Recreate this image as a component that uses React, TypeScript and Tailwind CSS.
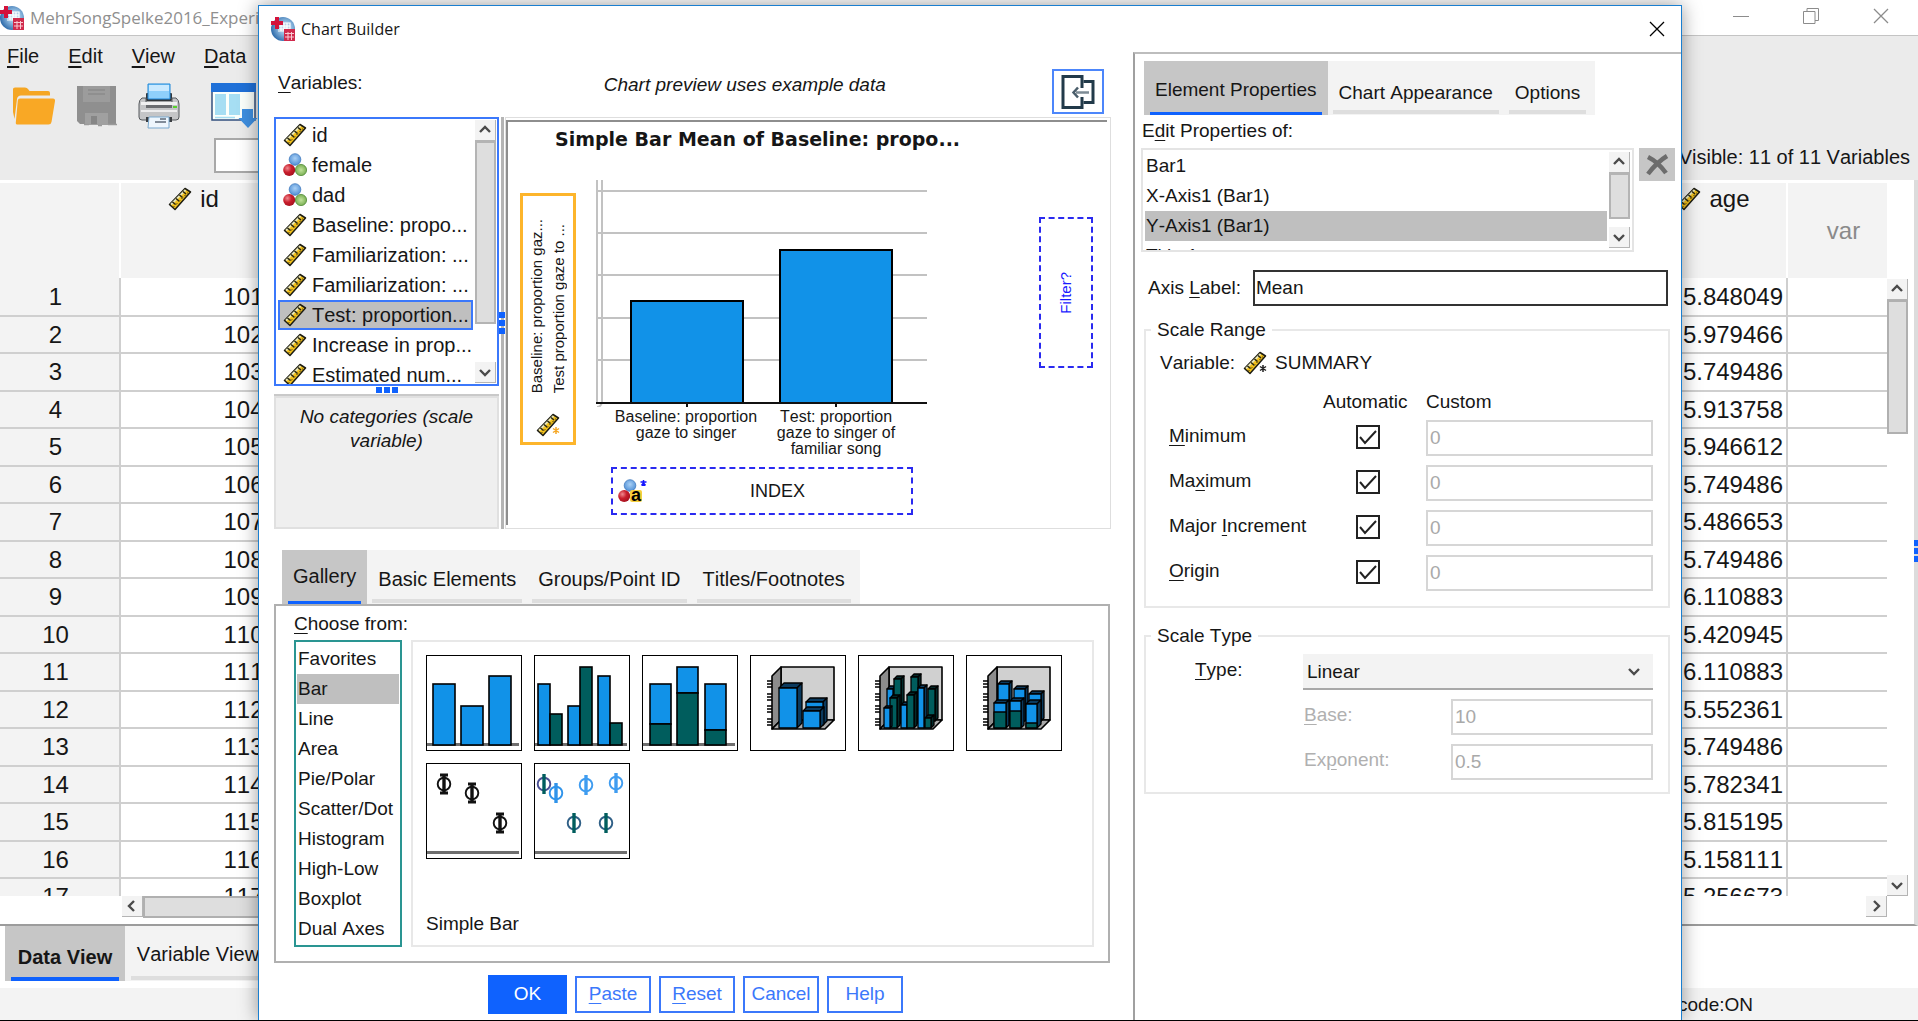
import React from "react";

const BLUE = "#1192e8";
const TEAL = "#005d5d";

/* ---------- icons ---------- */

function AppLogo() {
  return (
    <svg width="24" height="24" viewBox="0 0 24 24" aria-hidden="true" className="shrink-0">
      <defs>
        <radialGradient id="globe" cx="0.6" cy="0.45" r="0.6">
          <stop offset="0" stopColor="#e3eef8" />
          <stop offset="0.5" stopColor="#86b3db" />
          <stop offset="1" stopColor="#2f6cab" />
        </radialGradient>
      </defs>
      <circle cx="12" cy="12" r="12" fill="url(#globe)" />
      <path d="M9 6h10v8H7M7 9h12M7 12h12M10 6v8M13 6v8M16 6v8" fill="none" stroke="#fff" strokeWidth="1.2" />
      <path d="M4 0h4v4h4v4H8v4H4V8H0V4h4z" fill="#d3123a" />
      <rect x="13" y="12" width="11" height="12" fill="#d02a4c" />
      <path d="M14 16.500h9M14 20h9M17 15v8M20.500 15v8" stroke="#f8c9d2" strokeWidth="1" />
    </svg>
  );
}

function Ruler({ star }: { star?: string }) {
  return (
    <svg width="24" height="24" viewBox="0 0 24 24" aria-hidden="true" className="shrink-0">
      <path d="M1.500 17.500 17 1.500l5.500 3.500L7 22.500z" fill="#f2c11c" stroke="#1c1c14" strokeWidth="1.500" strokeLinejoin="round" />
      <path d="M3 17.500 17.500 3" stroke="#e8e6b8" strokeWidth="1.800" />
      <path d="M4.500 15l3 2.500M8 11.500l3 2.500M11.500 8l3 2.500M15 4.500l3 2.500" stroke="#2a2712" strokeWidth="1.600" />
      <path d="M5 20.500 20 5.500" stroke="#3a3618" strokeWidth="1" strokeDasharray="2 2" />
      {star && <path d="M20 14v7M17 15.500l6 4M23 15.500l-6 4" stroke={star} strokeWidth="1.500" />}
    </svg>
  );
}

function Balls({ letter }: { letter?: boolean }) {
  return (
    <svg width={letter ? 30 : 24} height="24" viewBox={letter ? "0 0 30 24" : "0 0 24 24"} aria-hidden="true" className="shrink-0">
      <defs>
        <radialGradient id="ballBlue" cx="0.5" cy="0.4" r="0.6">
          <stop offset="0" stopColor="#a9d0f5" />
          <stop offset="1" stopColor="#4f8fd6" />
        </radialGradient>
        <radialGradient id="ballRed" cx="0.35" cy="0.35" r="0.7">
          <stop offset="0" stopColor="#f08a90" />
          <stop offset="0.5" stopColor="#c91e2c" />
          <stop offset="1" stopColor="#a5101e" />
        </radialGradient>
        <radialGradient id="ballGreen" cx="0.5" cy="0.5" r="0.6">
          <stop offset="0" stopColor="#c2e39c" />
          <stop offset="1" stopColor="#6ba544" />
        </radialGradient>
      </defs>
      <circle cx="12" cy="6.500" r="5.800" fill="url(#ballBlue)" stroke="#3f79bd" strokeWidth="0.800" />
      <circle cx="6.200" cy="17" r="6" fill="url(#ballRed)" />
      {letter ? (
        <>
          <rect x="12" y="11" width="12" height="12" rx="2" fill="#f6cf3c" />
          <text x="13" y="22" fontFamily="Liberation Sans, sans-serif" fontWeight="700" fontSize="18" fill="#000">a</text>
          <path d="M25.500 1v6M22.500 3h6M23.500 6.500l2-2.500 2 2.500" stroke="#1414ff" strokeWidth="1.500" fill="none" />
        </>
      ) : (
        <circle cx="18" cy="17" r="5.600" fill="url(#ballGreen)" stroke="#4f8a35" strokeWidth="0.800" />
      )}
    </svg>
  );
}

function Chevron({ dir }: { dir: "up" | "down" | "left" | "right" }) {
  const d = {
    up: "M2 9l5-5 5 5",
    down: "M2 5l5 5 5-5",
    left: "M9 2L4 7l5 5",
    right: "M5 2l5 5-5 5",
  }[dir];
  return (
    <svg width="14" height="14" viewBox="0 0 14 14" aria-hidden="true">
      <path d={d} fill="none" stroke="#4a4a4a" strokeWidth="2.400" />
    </svg>
  );
}

function ArrowButton({ dir, label }: { dir: "up" | "down" | "left" | "right"; label: string }) {
  return (
    <button aria-label={label} className="flex h-[21px] w-[21px] shrink-0 items-center justify-center border-r border-b border-[#b4b4b4] bg-[#f3f3f3]">
      <Chevron dir={dir} />
    </button>
  );
}

function FolderIcon() {
  return (
    <svg width="44" height="40" viewBox="0 0 44 40" aria-hidden="true">
      <path d="M1 3q0-1.500 2-1.500h10q2 0 3 1.500l1.500 2H36q2 0 2 2v2.500H9q-3.500 0-4 3.500L2.500 33 1 26z" fill="#f5a623" />
      <path d="M8 12.500h33q2.300 0 2 2.500l-3.500 21q-.5 2.500-3 2.500H5q-1.500 0-1.200-2l2-22q.2-2 2.200-2z" fill="#f9a825" />
    </svg>
  );
}

function SaveIcon() {
  return (
    <svg width="42" height="42" viewBox="0 0 42 42" aria-hidden="true">
      <path d="M1 1h39v38H4l-3-3z" fill="#8f8f8f" />
      <rect x="7" y="1" width="27" height="16" fill="#9c9c9c" />
      <path d="M12 5h17M12 9h17" stroke="#8a8a8a" strokeWidth="1.500" />
      <rect x="9" y="28" width="23" height="12" fill="#a0a0a0" />
      <rect x="15" y="31" width="6" height="8" fill="#868686" />
      <path d="M8 39.500h5M22 40.500h4M32 39.500h9" stroke="#9a9a9a" strokeWidth="1.500" />
    </svg>
  );
}

function PrintIcon() {
  return (
    <svg width="42" height="46" viewBox="0 0 42 46" aria-hidden="true">
      <rect x="8" y="10" width="26" height="8" rx="1" fill="#33373b" />
      <path d="M10 1h22v15H10z" fill="#8fd0fb" stroke="#1d86d8" strokeWidth="1" />
      <path d="M11 2h20v6H11z" fill="#c9e9ff" />
      <path d="M4 15h4v4h26v-4h4q3 2 3 6v13q0 3-3 3H4q-3 0-3-3V21q0-4 3-6z" fill="#c4c5c7" stroke="#55585c" strokeWidth="1" />
      <path d="M3 19h36v3H3z" fill="#f0f0f1" />
      <path d="M8 22h26v3H8z" fill="#6a6c70" />
      <path d="M3 27h36v2H3z" fill="#ededee" />
      <rect x="35" y="23" width="4" height="2" fill="#56d22c" />
      <path d="M8 34h26v5H8z" fill="#3a3d41" />
      <path d="M11 34h20v11H10z" fill="#eef6fd" stroke="#7aa9cf" strokeWidth="1" />
      <path d="M17 39h11M22 36h6" stroke="#5d6a78" strokeWidth="1.300" />
    </svg>
  );
}

function GridDownIcon() {
  return (
    <svg width="48" height="46" viewBox="0 0 48 46" aria-hidden="true">
      <rect x="1" y="1" width="43" height="36" fill="#fbfffb" stroke="#33507f" strokeWidth="1.500" />
      <rect x="0" y="0" width="45" height="9" fill="#1f70d8" />
      <rect x="4" y="11" width="11" height="21" fill="#a6def3" />
      <rect x="18" y="11" width="11" height="21" fill="#a6def3" />
      <path d="M4 34.500h20" stroke="#a6def3" strokeWidth="1.500" />
      <path d="M31 26h11v9h4.500L37 45l-9.500-10H31z" fill="#3f8fe0" />
    </svg>
  );
}

/* ---------- gallery thumbnails ---------- */

function Baseline() {
  return <rect x="1" y="88" width="92" height="3" fill="#6f6f6f" />;
}

function Rects({ items }: { items: [number, number, number, number, string][] }) {
  return (
    <>
      {items.map(([x1, y1, x2, y2, fill]) => (
        <rect key={`${x1}-${y1}`} x={x1} y={y1} width={x2 - x1} height={y2 - y1} fill={fill} stroke="#000" strokeWidth="1.600" />
      ))}
    </>
  );
}

function Room() {
  return (
    <g stroke="#000" strokeWidth="1.600" strokeLinejoin="round">
      <path d="M31 12h53v53H31z" fill="#d0d0d0" />
      <path d="M22 21l9-9v53l-9 9z" fill="#8c8c8c" />
      <path d="M22 74l9-9h53l-9 9z" fill="#a8a8a8" />
      <path d="M17 26h5M17 29h5M17 32h5M17 39h5M17 42h5M17 45h5M17 51h5M17 54h5M17 57h5M17 64h5M17 67h5M17 70h5" />
    </g>
  );
}

function Block({ x, y, w, b, d = 4, fill, split }: { x: number; y: number; w: number; b: number; d?: number; fill: string; split?: number }) {
  const dark = fill === BLUE ? "#0b3a5e" : "#032a2a";
  return (
    <g stroke="#000" strokeWidth="1.300" strokeLinejoin="round">
      <path d={`M${x} ${y}l${d}-${d}h${w}l-${d} ${d}z`} fill={dark} />
      <path d={`M${x + w} ${y}l${d}-${d}V${b - d}l-${d} ${d}z`} fill={dark} />
      <rect x={x} y={y} width={w} height={b - y} fill={fill} />
      {split && <rect x={x} y={split} width={w} height={b - split} fill={TEAL} />}
    </g>
  );
}

function Phi({ x, y, color, stem, caps }: { x: number; y: number; color: string; stem?: string; caps?: boolean }) {
  return (
    <g fill="none">
      <circle cx={x} cy={y} r="6.300" stroke={color} strokeWidth="1.900" />
      <path d={`M${x} ${y - 10}v20`} stroke={stem ?? color} strokeWidth="3.400" />
      {caps && <path d={`M${x - 4} ${y - 9}h8M${x - 4} ${y + 9}h8`} stroke={color} strokeWidth="3" />}
    </g>
  );
}

const thumbnails: { label: string; art: React.ReactNode }[] = [
  {
    label: "Simple Bar",
    art: (<><Baseline /><Rects items={[[7, 29, 29, 90, BLUE], [35, 51, 57, 90, BLUE], [63, 21, 85, 90, BLUE]]} /></>),
  },
  {
    label: "Clustered Bar",
    art: (<><Baseline /><Rects items={[[4, 29, 16, 90, BLUE], [16, 59, 28, 90, TEAL], [34, 51, 46, 90, BLUE], [46, 12, 58, 90, TEAL], [64, 21, 76, 90, BLUE], [76, 68, 88, 90, TEAL]]} /></>),
  },
  {
    label: "Stacked Bar",
    art: (<><Baseline /><Rects items={[[8, 29, 29, 69, BLUE], [8, 69, 29, 90, TEAL], [35, 12, 56, 38, BLUE], [35, 38, 56, 90, TEAL], [63, 29, 84, 75, BLUE], [63, 75, 84, 90, TEAL]]} /></>),
  },
  {
    label: "Simple 3-D Bar",
    art: (<><Room /><Block x={56} y={47} w={17} b={70} fill={BLUE} /><Block x={29} y={33} w={18} b={73} d={5} fill={BLUE} /><Block x={53} y={56} w={17} b={73} d={4} fill={BLUE} /></>),
  },
  {
    label: "Clustered 3-D Bar",
    art: (
      <>
        <Room />
        <Block x={29} y={34} w={6} b={68} d={3} fill={BLUE} />
        <Block x={36} y={24} w={7} b={68} d={3} fill={TEAL} />
        <Block x={53} y={22} w={7} b={68} d={3} fill={TEAL} />
        <Block x={70} y={34} w={7} b={66} d={3} fill={TEAL} />
        <Block x={60} y={33} w={6} b={73} d={3} fill={BLUE} />
        <Block x={32} y={43} w={7} b={73} d={3} fill={TEAL} />
        <Block x={26} y={53} w={6} b={73} d={2} fill={BLUE} />
        <Block x={43} y={50} w={6} b={73} d={3} fill={BLUE} />
        <Block x={49} y={40} w={7} b={73} d={3} fill={TEAL} />
        <Block x={67} y={63} w={6} b={73} d={3} fill={TEAL} />
      </>
    ),
  },
  {
    label: "Stacked 3-D Bar",
    art: (
      <>
        <Room />
        <Block x={32} y={29} w={11} b={66} d={3} fill={BLUE} />
        <Block x={48} y={34} w={11} b={66} d={3} fill={BLUE} />
        <Block x={63} y={39} w={12} b={66} d={3} fill={BLUE} split={47} />
        <Block x={28} y={48} w={12} b={73} d={3} fill={BLUE} split={57} />
        <Block x={44} y={46} w={11} b={73} d={3} fill={BLUE} split={56} />
        <Block x={60} y={49} w={11} b={73} d={4} fill={BLUE} split={68} />
      </>
    ),
  },
  {
    label: "Simple Error Bar",
    art: (<><Baseline /><Phi x={18} y={21} color="#111" caps /><Phi x={46} y={30} color="#111" caps /><Phi x={74} y={60} color="#111" caps /></>),
  },
  {
    label: "Clustered Error Bar",
    art: (
      <>
        <Baseline />
        <Phi x={10} y={21} color="#4a4f94" stem={TEAL} />
        <Phi x={22} y={30} color="#2f93ea" />
        <Phi x={52} y={22} color="#3f9cf0" />
        <Phi x={82} y={20} color="#3f9cf0" />
        <Phi x={40} y={60} color="#2f5f86" stem={TEAL} />
        <Phi x={72} y={60} color="#2f5f86" stem={TEAL} />
      </>
    ),
  },
];

/* ---------- data ---------- */

const ages = [
  "5.848049", "5.979466", "5.749486", "5.913758", "5.946612", "5.749486", "5.486653", "5.749486", "6.110883",
  "5.420945", "6.110883", "5.552361", "5.749486", "5.782341", "5.815195", "5.158111", "5.256673",
];

const variables: { name: string; nominal?: boolean; selected?: boolean }[] = [
  { name: "id" },
  { name: "female", nominal: true },
  { name: "dad", nominal: true },
  { name: "Baseline: propo..." },
  { name: "Familiarization: ..." },
  { name: "Familiarization: ..." },
  { name: "Test: proportion...", selected: true },
  { name: "Increase in prop..." },
  { name: "Estimated num..." },
];

const chartTypes = ["Favorites", "Bar", "Line", "Area", "Pie/Polar", "Scatter/Dot", "Histogram", "High-Low", "Boxplot", "Dual Axes"];

function Mnemonic({ text, at = 0 }: { text: string; at?: number }) {
  return (
    <>
      {text.slice(0, at)}
      <span className="underline underline-offset-3">{text[at]}</span>
      {text.slice(at + 1)}
    </>
  );
}

/* ---------- data editor behind the dialog ---------- */

function WindowX({ color }: { color: string }) {
  return (
    <svg width="16" height="16" viewBox="0 0 16 16" aria-hidden="true">
      <path d="M1 1l14 14M15 1L1 15" stroke={color} strokeWidth="1.300" />
    </svg>
  );
}

function DataEditor() {
  return (
    <div className="flex h-full flex-col bg-white">
      <header className="flex h-9 shrink-0 items-center border-b border-[#c4c4c4] bg-white">
        <AppLogo />
        <h1 className="ml-[6px] flex-1 font-[Open_Sans,sans-serif] text-[17px] text-[#8f8f8f]">MehrSongSpelke2016_Experiment</h1>
        <div className="flex gap-[54px] pr-[29px] pb-1">
          <button aria-label="Minimize">
            <svg width="16" height="16" viewBox="0 0 16 16"><path d="M0 8.500h16" stroke="#8c8c8c" /></svg>
          </button>
          <button aria-label="Restore">
            <svg width="16" height="16" viewBox="0 0 16 16"><path d="M.5 3.500h11.500v12H.5zM4 3.500V.5h11.500v12H12" fill="none" stroke="#8c8c8c" /></svg>
          </button>
          <button aria-label="Close"><WindowX color="#8c8c8c" /></button>
        </div>
      </header>

      <div className="shrink-0 bg-[#ebebeb] pb-[7px]">
        <nav className="flex h-10 items-center gap-[29px] pb-px pl-[7px] text-[20px]">
          {["File", "Edit", "View", "Data"].map((m) => (
            <button key={m}><Mnemonic text={m} /></button>
          ))}
        </nav>
        <div className="flex h-[60px] items-start gap-[20px] pt-[7px] pl-3">
          <button aria-label="Open" className="pt-[3px]"><FolderIcon /></button>
          <button aria-label="Save" className="pt-[2px]"><SaveIcon /></button>
          <button aria-label="Print"><PrintIcon /></button>
          <button aria-label="Recall dialogs" className="ml-[11px]"><GridDownIcon /></button>
        </div>
        <div className="flex h-[37px] items-center justify-between pt-[2px] pr-2 pl-[214px]">
          <input aria-label="Cell value" className="h-[35px] w-[1200px] border-2 border-[#a8a8a8] bg-white" readOnly />
          <span className="pt-[2px] text-[20px] whitespace-nowrap">Visible: 11 of 11 Variables</span>
        </div>
      </div>

      <div className="flex min-h-0 flex-1 flex-col border-r-4 border-b-2 border-[#dcdcdc] border-b-[#9c9c9c] pr-[6px]">
        <div className="flex min-h-0 flex-1">
          <div className="min-h-0 flex-1 overflow-hidden pt-[3px]">
            <table className="w-full table-fixed border-collapse text-[24px] leading-7">
              <colgroup>
                <col className="w-[120px]" />
                <col className="w-[147px]" />
                <col />
                <col className="w-[147px]" />
                <col className="w-[100px]" />
              </colgroup>
              <thead>
                <tr className="h-[95px] bg-[#f3f3f3] align-top">
                  <th className="border-r-2 border-white" />
                  <th className="border-r-2 border-white pt-[2px] font-normal">
                    <span className="flex items-center justify-center gap-2"><Ruler />id</span>
                  </th>
                  <th className="border-r-2 border-white" />
                  <th className="border-r-2 border-white pt-[2px] font-normal">
                    <span className="flex items-center justify-center gap-2"><Ruler />age</span>
                  </th>
                  <th className="pl-3 align-middle font-normal text-[#8a8a8a]">var</th>
                </tr>
              </thead>
              <tbody>
                {ages.map((age, i) => (
                  <tr key={i} className="h-[37px] border-b-2 border-[#cfcfcf] odd:h-[38px]">
                    <th className="border-r-2 border-[#cfcfcf] bg-[#f3f3f3] pr-2 font-normal">{i + 1}</th>
                    <td className="border-r border-[#cfcfcf] pr-[3px] text-right">{101 + i}</td>
                    <td className="border-r border-[#cfcfcf]" />
                    <td className="border-r-2 border-[#cfcfcf] pr-[3px] text-right">{age}</td>
                    <td />
                  </tr>
                ))}
              </tbody>
            </table>
          </div>
          <div className="flex w-[21px] flex-col pt-[99px]">
            <ArrowButton dir="up" label="Scroll up" />
            <div className="h-[134px] border-2 border-[#b0b0b0] bg-[#dedede]" />
            <div className="flex-1" />
            <ArrowButton dir="down" label="Scroll down" />
          </div>
        </div>
        <div className="mr-[21px] mb-[6px] ml-[122px] flex h-[22px]">
          <ArrowButton dir="left" label="Scroll left" />
          <div className="mr-[400px] flex-1 border-2 border-[#b0b0b0] bg-[#dedede]" />
          <ArrowButton dir="right" label="Scroll right" />
        </div>
      </div>

      <div className="flex h-[62px] shrink-0 items-start pl-[5px]">
        <button className="flex h-[55px] w-[120px] flex-col items-center justify-end bg-[#c6c6c6] px-[6px] text-[20px] font-bold">
          <span className="pb-[5px]">Data View</span>
          <span className="h-[4px] w-full bg-[#0f62fe]" />
        </button>
        <button className="flex h-[55px] w-[140px] flex-col items-center justify-end bg-[#f3f3f3] pb-px pl-[6px] text-[20px]">
          <span className="pb-[7px] whitespace-nowrap">Variable View</span>
          <span className="h-[4px] w-full bg-[#dedede]" />
        </button>
      </div>
      <footer className="flex h-8 shrink-0 items-center justify-end bg-[#f3f3f3] pt-[2px] pr-[165px] text-[19px]">Unicode:ON</footer>
      <div className="h-px shrink-0 bg-black" />
    </div>
  );
}

/* ---------- dialog ---------- */

function Dots({ vertical }: { vertical?: boolean }) {
  return (
    <span className={vertical ? "flex flex-col gap-[2px]" : "flex gap-[2px]"}>
      <i className="size-[6px] bg-[#0f62fe]" />
      <i className="size-[6px] bg-[#0f62fe]" />
      <i className="size-[6px] bg-[#0f62fe]" />
    </span>
  );
}

function Tabs({ items }: { items: string[] }) {
  return (
    <div role="tablist" className="flex h-[54px] w-fit bg-[#f3f3f3] pr-1 whitespace-nowrap">
      {items.map((t, i) =>
        i === 0 ? (
          <button key={t} role="tab" aria-selected="true" className="flex flex-col items-center justify-end bg-[#c6c6c6] px-[6px]">
            <span className="px-[5px] pb-[10px]">{t}</span>
            <span className="h-[3px] w-full bg-[#0f62fe]" />
          </button>
        ) : (
          <button key={t} role="tab" aria-selected="false" className="flex flex-col items-center justify-end px-[5px] pb-px">
            <span className="px-[6px] pb-[5px]">{t}</span>
            <span className="h-[4px] w-full bg-[#dedede]" />
          </button>
        ),
      )}
    </div>
  );
}

function VariableList() {
  return (
    <div className="flex h-[269px] border-2 border-[#3b78fb] pl-[2px]">
      <ul id="variables" role="listbox" className="min-w-0 flex-1 overflow-hidden pt-px text-[20px]">
        {variables.map((v, i) => (
          <li
            key={i}
            role="option"
            aria-selected={!!v.selected}
            className={
              v.selected
                ? "flex h-[30px] items-center gap-[5px] border-2 border-[#3b78fb] bg-[#bfbfbf] pl-[3px] whitespace-nowrap"
                : "flex h-[30px] items-center gap-[5px] pl-[5px] whitespace-nowrap"
            }
          >
            {v.nominal ? <Balls /> : <Ruler />}
            {v.name}
          </li>
        ))}
      </ul>
      <div className="flex w-[24px] flex-col items-center py-px pl-px">
        <ArrowButton dir="up" label="Scroll variables up" />
        <div className="h-[183px] w-[21px] border-2 border-[#b4b4b4] bg-[#dedede]" />
        <div className="flex-1" />
        <ArrowButton dir="down" label="Scroll variables down" />
      </div>
    </div>
  );
}

function PreviewChart() {
  return (
    <figure className="w-[333px] text-[16px] leading-4">
      <svg width="333" height="228" viewBox="0 0 333 228" aria-label="Bar chart preview" className="block">
        <path d="M0 12h331M0 54h331M0 96h331M0 139h331M0 181h331" stroke="#c2c2c2" strokeWidth="2" />
        <path d="M1 1v223M6 1v222q-1 5-5 5" fill="none" stroke="#c2c2c2" strokeWidth="2" />
        <rect x="35" y="122" width="112" height="102" fill={BLUE} stroke="#000" strokeWidth="2" />
        <rect x="184" y="71" width="112" height="153" fill={BLUE} stroke="#000" strokeWidth="2" />
        <path d="M0 224h331M91 224v4M240 224v4" stroke="#111" strokeWidth="2" />
      </svg>
      <figcaption className="mt-[2px] mr-[3px] flex justify-center text-center">
        <span className="w-[150px]">Baseline: proportion gaze to singer</span>
        <span className="w-[150px]">Test: proportion gaze to singer of familiar song</span>
      </figcaption>
    </figure>
  );
}

function Preview() {
  return (
    <div className="flex-1 border border-[#dedede] pt-[2px] pr-[3px] pb-[3px]">
      <div className="flex h-full flex-col border-t-2 border-l-2 border-[#8e8e8e]">
        <div className="h-[57px] pt-[3px] pl-[47px] font-[DejaVu_Sans,sans-serif] text-[19px] leading-7 font-bold whitespace-nowrap">
          Simple Bar Mean of Baseline: propo...
        </div>
        <div className="flex pr-[14px] pl-[12px]">
          <div className="mt-[14px] flex h-[252px] w-[56px] flex-col items-center justify-end gap-[20px] border-[3px] border-[#fdb52b] pb-[5px]">
            <div className="rotate-180 text-[15px] leading-[22px] whitespace-nowrap [writing-mode:vertical-rl]">
              <div>Baseline: proportion gaz...</div>
              <div>Test proportion gaze to ...</div>
            </div>
            <Ruler star="#f5a623" />
          </div>
          <div className="ml-[20px]"><PreviewChart /></div>
          <div className="mt-[38px] ml-auto flex h-[151px] w-[54px] items-center justify-center border-2 border-dashed border-[#2a2af0] text-[15px] text-[#1a1aff]">
            <span className="rotate-180 [writing-mode:vertical-rl]">Filter?</span>
          </div>
        </div>
        <div className="mt-[10px] ml-[103px] flex h-[48px] w-[302px] items-center border-2 border-dashed border-[#2a2af0] pl-[5px] text-[18px]">
          <Balls letter />
          <span className="flex-1 pr-[4px] text-center">INDEX</span>
        </div>
      </div>
    </div>
  );
}

function BuilderPane() {
  return (
    <section className="flex min-w-0 flex-1 flex-col pr-[22px] pl-[15px]">
      <div className="flex h-[65px] items-start justify-between pr-[7px] pl-1">
        <label htmlFor="variables" className="pt-[17px] text-[19px]"><Mnemonic text="Variables:" /></label>
        <p className="pt-[19px] pl-[75px] text-[19px] italic">Chart preview uses example data</p>
        <button aria-label="Collapse panel" className="mt-[17px] flex h-[45px] w-[52px] items-center justify-center border-2 border-[#4c86fb]">
          <svg width="34" height="34" viewBox="0 0 34 34" aria-hidden="true">
            <path d="M21 13V1.500H2v31h19V22" fill="none" stroke="#223a4a" strokeWidth="3" />
            <path d="M22.500 6.500h9.500v21h-9.500" fill="none" stroke="#223a4a" strokeWidth="3" />
            <path d="M28 17.500H15" fill="none" stroke="#7d8b95" strokeWidth="2.500" />
            <path d="M17 12.500l-4.500 5 4.500 5" fill="none" stroke="#4a5d6a" strokeWidth="2.500" />
          </svg>
        </button>
      </div>

      <div className="flex h-[412px]">
        <div className="flex w-[225px] flex-col">
          <VariableList />
          <div className="flex h-[10px] items-center justify-center border-b-2 border-[#c9c9c9]"><Dots /></div>
          <div className="flex-1 border-2 border-[#e0e0e0] bg-[#efefef] px-2 pt-[7px] text-center text-[19px] leading-6 italic">
            No categories (scale variable)
          </div>
        </div>
        <div className="flex w-[6px] justify-center">
          <div className="flex w-[3px] items-center justify-center bg-[#b4b4b4]"><Dots vertical /></div>
        </div>
        <Preview />
      </div>

      <div className="mt-[21px] mr-[2px] ml-2 text-[19px] min-[1600px]:text-[20px]"><Tabs items={["Gallery", "Basic Elements", "Groups/Point ID", "Titles/Footnotes"]} /></div>
      <div className="mr-px flex h-[359px] flex-col border-2 border-[#b0b0b0] pt-[3px] pr-[14px] pl-[18px] text-[19px]">
        <label htmlFor="chart-types" className="h-[31px] pt-[1px]"><Mnemonic text="Choose from:" /></label>
        <div className="flex h-[307px] gap-[9px]">
          <ul id="chart-types" role="listbox" className="w-[108px] border-2 border-[#2a9592] px-px py-[2px]">
            {chartTypes.map((t) => (
              <li
                key={t}
                role="option"
                aria-selected={t === "Bar"}
                className={t === "Bar" ? "h-[30px] bg-[#bfbfbf] pl-px leading-[30px]" : "h-[30px] pl-px leading-[30px] whitespace-nowrap"}
              >
                {t}
              </li>
            ))}
          </ul>
          <div className="flex flex-1 flex-col justify-between border-2 border-[#e8e8e8] pt-[13px] pb-[7px] pl-[13px]">
            <div className="flex flex-wrap gap-3">
              {thumbnails.map((t) => (
                <button key={t.label} aria-label={t.label} className="size-[96px] border border-black">
                  <svg width="94" height="94" viewBox="1 1 94 94" aria-hidden="true">{t.art}</svg>
                </button>
              ))}
            </div>
            <div>Simple Bar</div>
          </div>
        </div>
      </div>

      <div className="mt-3 flex items-center justify-center gap-2 pl-[6px] text-[19px]">
        <button className="h-[39px] w-[79px] bg-[#0f62fe] text-white">OK</button>
        {["Paste", "Reset", "Cancel", "Help"].map((b) => (
          <button key={b} className="h-[37px] w-[76px] border-2 border-[#3b78fb] text-[#3b78fb]">
            {b === "Paste" || b === "Reset" ? <Mnemonic text={b} /> : b}
          </button>
        ))}
      </div>
    </section>
  );
}

const ranges = [
  { id: "min", text: "Minimum", at: 0 },
  { id: "max", text: "Maximum", at: 2 },
  { id: "inc", text: "Major Increment", at: 6 },
  { id: "org", text: "Origin", at: 0 },
];

const exponents = [
  { id: "base", text: "Base:", value: "10", at: 0 },
  { id: "exponent", text: "Exponent:", value: "0.5", at: 2 },
];

function PropertiesPane() {
  return (
    <section className="w-[548px] shrink-0 border-t-2 border-l-2 border-t-[#bdbdbd] border-l-[#a0a0a0] pt-[7px] pl-[6px] text-[19px] leading-6">
      <div className="ml-[3px]"><Tabs items={["Element Properties", "Chart Appearance", "Options"]} /></div>
      <label htmlFor="elements" className="mt-1 ml-px block"><Mnemonic text="Edit Properties of:" at={1} /></label>
      <div className="mt-[5px] mr-[6px] flex items-start justify-between">
        <div className="flex h-[104px] w-[493px] border-2 border-[#e4e4e4] px-[2px]">
          <ul id="elements" role="listbox" className="flex-1 overflow-hidden pt-px">
            {["Bar1", "X-Axis1 (Bar1)", "Y-Axis1 (Bar1)", "Title 1"].map((e, i) => (
              <li key={e} role="option" aria-selected={i === 2} className={i === 2 ? "h-[30px] bg-[#bfbfbf] pl-px leading-[30px]" : "h-[30px] pl-px leading-[30px]"}>
                {e}
              </li>
            ))}
          </ul>
          <div className="flex w-[23px] flex-col items-end py-[2px]">
            <ArrowButton dir="up" label="Scroll elements up" />
            <div className="h-[46px] w-[21px] border-2 border-[#b4b4b4] bg-[#dedede]" />
            <div className="flex-1" />
            <ArrowButton dir="down" label="Scroll elements down" />
          </div>
        </div>
        <button aria-label="Delete element" className="flex h-[33px] w-[36px] items-center justify-center bg-[#c6c6c6]">
          <svg width="24" height="22" viewBox="0 0 24 22" aria-hidden="true">
            <path d="M3 3q10 5 18 16" fill="none" stroke="#6c6c6c" strokeWidth="4.500" />
            <path d="M22 2Q12 8 3 20" fill="none" stroke="#6c6c6c" strokeWidth="4.500" />
          </svg>
        </button>
      </div>
      <div className="mt-[18px] mr-[13px] flex h-[36px] items-center gap-[12px] pl-[7px]">
        <label htmlFor="axis-label"><Mnemonic text="Axis Label:" at={5} /></label>
        <input id="axis-label" defaultValue="Mean" className="h-full min-w-0 flex-1 border-2 border-[#333] px-px" />
      </div>

      <fieldset className="mt-[12px] mr-[11px] ml-[3px] h-[290px] min-w-0 border-2 border-[#e8e8e8] pr-[15px] pl-[14px]">
        <legend className="-ml-[9px] px-[6px]">Scale Range</legend>
        <div className="mt-[9px] flex items-center gap-[8px]">
          <span>Variable:</span>
          <Ruler star="#222" />
          <span>SUMMARY</span>
        </div>
        <div className="mt-[15px] grid grid-cols-[154px_103px_minmax(0,1fr)] gap-y-[9px] pl-[9px]">
          <span className="h-[21px]" />
          <span className="h-[21px] leading-6">Automatic</span>
          <span className="h-[21px] leading-6">Custom</span>
          {ranges.map((r) => (
            <React.Fragment key={r.id}>
              <label htmlFor={r.id} className="pt-[4px]"><Mnemonic text={r.text} at={r.at} /></label>
              <span className="relative mt-[5px] ml-[33px] size-6">
                <input id={r.id} type="checkbox" defaultChecked aria-label={`${r.text} automatic`} className="block size-6 appearance-none border-2 border-[#222] bg-white" />
                <svg width="24" height="24" viewBox="0 0 24 24" aria-hidden="true" className="pointer-events-none absolute inset-0">
                  <path d="M4 12l5 6L20 6" fill="none" stroke="#222" strokeWidth="2" />
                </svg>
              </span>
              <input disabled aria-label={`${r.text} custom`} defaultValue="0" className="h-9 w-full border-2 border-[#d6d6d6] bg-white px-[2px] text-[#a9a9a9]" />
            </React.Fragment>
          ))}
        </div>
      </fieldset>

      <fieldset className="mt-[16px] mr-[11px] ml-[3px] h-[170px] min-w-0 border-2 border-[#e8e8e8] pr-[15px] pl-[49px]">
        <legend className="-ml-[44px] px-[6px]">Scale Type</legend>
        <div className="mt-[6px] flex">
          <label htmlFor="scale-type" className="w-[108px] pt-[4px]"><Mnemonic text="Type:" /></label>
          <span className="relative min-w-0 flex-1">
            <select id="scale-type" className="h-9 w-full appearance-none border-b-2 border-[#a8a8a8] bg-[#f3f3f3] pt-[2px] pl-1">
              <option>Linear</option>
            </select>
            <span className="pointer-events-none absolute top-[10px] right-[12px]"><Chevron dir="down" /></span>
          </span>
        </div>
        {exponents.map((f) => (
          <div key={f.id} className="mt-[9px] flex pl-[109px] text-[#b0b0b0]">
            <label htmlFor={f.id} className="w-[147px] shrink-0 pt-[4px]"><Mnemonic text={f.text} at={f.at} /></label>
            <input id={f.id} disabled defaultValue={f.value} className="h-9 w-0 min-w-0 flex-1 border-2 border-[#d6d6d6] bg-white px-[2px] text-[#a9a9a9]" />
          </div>
        ))}
      </fieldset>
    </section>
  );
}

function ChartBuilder() {
  return (
    <div
      role="dialog"
      aria-label="Chart Builder"
      className="absolute top-[5px] right-[236px] bottom-px left-[258px] flex flex-col border border-b-0 border-[#1a7fd0] bg-white shadow-[0_0_18px_rgba(0,0,0,0.4)]"
    >
      <div className="flex h-[46px] shrink-0 items-center gap-[6px] pr-[16px] pl-3">
        <AppLogo />
        <h2 className="flex-1 font-[Open_Sans,sans-serif] text-[16px]">Chart Builder</h2>
        <button aria-label="Close dialog"><WindowX color="#000" /></button>
      </div>
      <div className="flex min-h-0 flex-1">
        <BuilderPane />
        <PropertiesPane />
      </div>
    </div>
  );
}

export default function App() {
  return (
    <main className="relative h-screen overflow-hidden font-[Liberation_Sans,Arial,sans-serif] text-[#161616] [font-kerning:none]">
      <DataEditor />
      <span className="absolute top-[540px] right-0 w-1 overflow-hidden"><Dots vertical /></span>
      <ChartBuilder />
    </main>
  );
}
